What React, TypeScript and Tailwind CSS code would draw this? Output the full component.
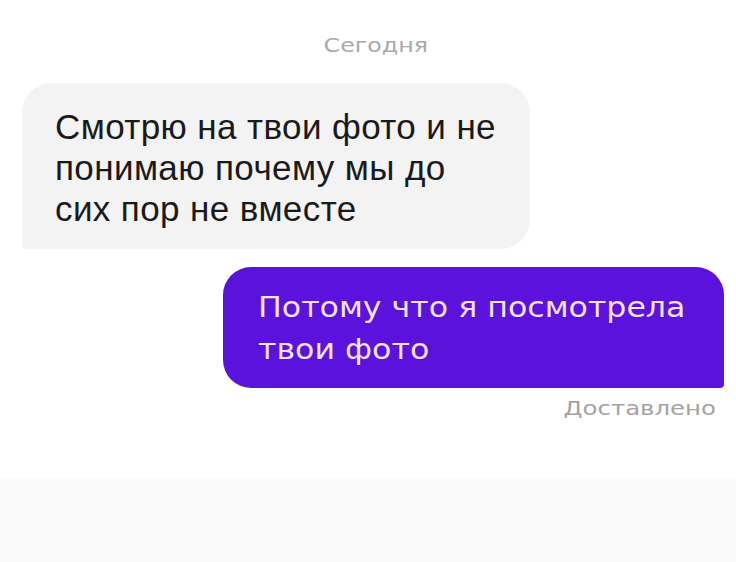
export default function App() {
  return (
    <div className="h-[562px] w-[736px] flex flex-col bg-white font-['Liberation_Sans',Arial,sans-serif]">
      <p className="mt-[32px] pl-[16px] text-center font-['DejaVu_Sans',sans-serif] text-[19px] leading-[26px] text-[#a9a9a9]">
        <span className="inline-block origin-center scale-x-[1.25]">Сегодня</span>
      </p>

      <div className="mt-[25px] ml-[22px] w-[508px] h-[166px] rounded-[30px] rounded-bl-[4px] bg-[#f3f3f3] pl-[33px] pt-[23px]">
        <p className="text-[35px] leading-[41px] text-[#1a1a1a] tracking-[0.4px]">
          Смотрю на твои фото и не
          <br />
          понимаю почему мы до
          <br />
          сих пор не вместе
        </p>
      </div>

      <div className="mt-[18px] ml-[223px] w-[501px] h-[121px] rounded-[28px] rounded-br-[4px] bg-[#5a12dc] pl-[35px] pt-[20px]">
        <p className="inline-block origin-left scale-x-[1.13] font-['DejaVu_Sans',sans-serif] text-[28px] leading-[42px] text-[#f4e2f6]">
          Потому что я посмотрела
          <br />
          твои фото
        </p>
      </div>

      <p className="mt-[6px] mr-[20px] text-right font-['DejaVu_Sans',sans-serif] text-[20px] leading-[28px] text-[#a3a3a3]">
        <span className="inline-block origin-right scale-x-[1.22]">Доставлено</span>
      </p>

      <div className="flex-1" />
      <div className="h-[84px] bg-[#fafafa]" />
    </div>
  );
}
